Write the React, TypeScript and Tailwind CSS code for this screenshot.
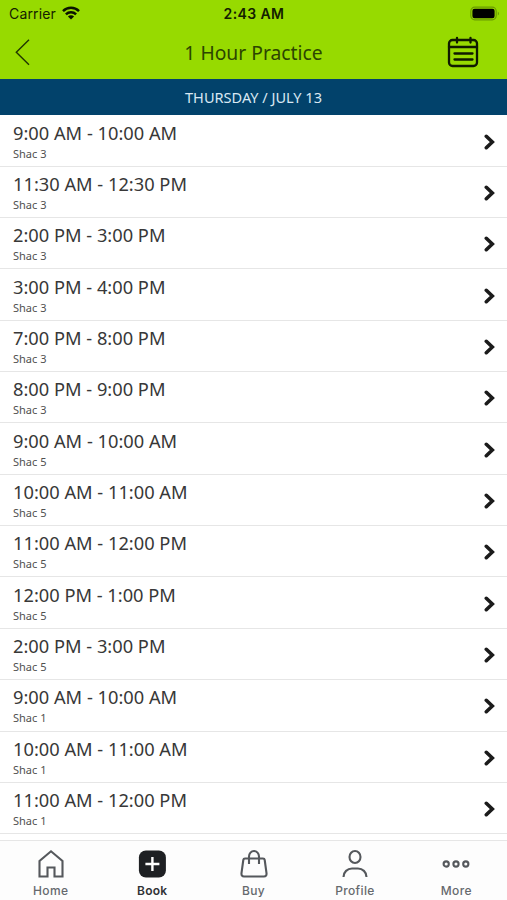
import type { ReactNode } from "react";

type Slot = { time: string; court: string };

const slots: Slot[] = [
  { time: "9:00 AM - 10:00 AM", court: "Shac 3" },
  { time: "11:30 AM - 12:30 PM", court: "Shac 3" },
  { time: "2:00 PM - 3:00 PM", court: "Shac 3" },
  { time: "3:00 PM - 4:00 PM", court: "Shac 3" },
  { time: "7:00 PM - 8:00 PM", court: "Shac 3" },
  { time: "8:00 PM - 9:00 PM", court: "Shac 3" },
  { time: "9:00 AM - 10:00 AM", court: "Shac 5" },
  { time: "10:00 AM - 11:00 AM", court: "Shac 5" },
  { time: "11:00 AM - 12:00 PM", court: "Shac 5" },
  { time: "12:00 PM - 1:00 PM", court: "Shac 5" },
  { time: "2:00 PM - 3:00 PM", court: "Shac 5" },
  { time: "9:00 AM - 10:00 AM", court: "Shac 1" },
  { time: "10:00 AM - 11:00 AM", court: "Shac 1" },
  { time: "11:00 AM - 12:00 PM", court: "Shac 1" },
];

function StatusBar() {
  return (
    <div className="grid h-[27px] grid-cols-[1fr_auto_1fr] items-center pl-[9px] pr-[6px] font-['Inter',sans-serif] text-[14px] leading-[26px] text-[#142000]">
      <div className="flex items-center gap-[6px]">
        <span className="tracking-[0.15px]">Carrier</span>
        <svg className="-mt-[1px]" width="18" height="14" viewBox="0 0 18 14" fill="none" stroke="#0b1400" strokeWidth="2.5">
          <path d="M1 5.1a11.4 11.4 0 0 1 16 0" />
          <path d="M3.9 8.4a7.3 7.3 0 0 1 10.2 0" />
          <path d="M9 13.6 5.9 10.5a4.4 4.4 0 0 1 6.2 0z" fill="#0b1400" stroke="none" />
        </svg>
      </div>
      <div className="-ml-[2px] text-center text-[14px] font-semibold tracking-[0.4px] whitespace-nowrap">2:43 AM</div>
      <svg className="-mt-[1px] justify-self-end" width="31" height="15" viewBox="0 0 31 15">
        <rect x="0.8" y="1.2" width="25.4" height="12.6" rx="4" fill="none" stroke="#6b9c00" strokeWidth="1.2" />
        <rect x="2.4" y="2.8" width="22.2" height="9.4" rx="2.2" fill="#000" />
        <path d="M27.8 5.4a2.8 2.8 0 0 1 0 4.2z" fill="#6b9c00" />
      </svg>
    </div>
  );
}

function Header() {
  return (
    <header className="flex h-[79px] shrink-0 flex-col bg-[#97da00]">
      <StatusBar />
      <div className="grid h-[52px] grid-cols-[80px_1fr_80px] items-center">
        <svg className="-mt-[2px] ml-[14px]" width="16" height="28" viewBox="0 0 16 28" fill="none" stroke="#203500" strokeWidth="1.4">
          <path d="M15 1.8 2.3 14.2 15 26.8" />
        </svg>
        <h1 className="text-center text-[19.3px] leading-[52px] text-[#2c4500]">1 Hour Practice</h1>
        <svg className="-mt-[2px] ml-[20px]" width="32" height="32" viewBox="0 0 32 32" fill="none" stroke="#101a00" strokeWidth="2.3" strokeLinecap="round">
          <rect x="2" y="4" width="28" height="26" rx="3.5" />
          <path d="M2 11h28M10 2v4.5M23.5 2v4.5M7.5 17.5h18M7.5 23.5h18" />
        </svg>
      </div>
    </header>
  );
}

function SlotRow({ time, court }: Slot) {
  return (
    <li className="flex h-[51.35px] items-center justify-between border-b border-[#e6e6e6] pl-[13px] pr-[12px]">
      <div className="pt-[1px]">
        <div className="text-[18.25px] leading-[24px] text-[#383838]">{time}</div>
        <div className="text-[11px] leading-[17px] text-[#505050]">{court}</div>
      </div>
      <svg className="mt-[2px]" width="11" height="16" viewBox="0 0 11 16" fill="none" stroke="#1b1b1b" strokeWidth="3.6" strokeLinecap="round">
        <path d="M2.3 2.3 8.3 8 2.3 13.7" />
      </svg>
    </li>
  );
}

function Tab({ label, active, children }: { label: string; active?: boolean; children: ReactNode }) {
  return (
    <div className="flex flex-1 flex-col items-center pt-[8px]">
      <svg width="30" height="30" viewBox="0 0 30 30" fill="none" stroke="#55585c" strokeWidth="2.1">
        {children}
      </svg>
      <span
        className={
          active
            ? "mt-[4px] font-['Inter',sans-serif] text-[12px] leading-[16px] font-semibold tracking-[0.2px] text-[#303236]"
            : "mt-[4px] font-['Inter',sans-serif] text-[12px] leading-[16px] font-medium tracking-[0.35px] text-[#66696d]"
        }
      >
        {label}
      </span>
    </div>
  );
}

export default function App() {
  return (
    <div className="flex h-[900px] w-[507px] flex-col overflow-hidden bg-white font-['Noto_Sans',sans-serif]">
      <Header />
      <div className="h-[36.4px] shrink-0 bg-[#02426b] text-center text-[14.55px] leading-[37px] text-[#d9e8f3]">
        THURSDAY / JULY 13
      </div>
      <ul className="h-[724.6px] shrink-0 overflow-hidden">
        {slots.map((slot, i) => (
          <SlotRow key={i} {...slot} />
        ))}
      </ul>
      <nav className="flex h-[60px] shrink-0 border-t border-[#e6e6e6] bg-[#fdfdfd]">
        <Tab label="Home">
          <path d="M3.5 27.5V12L15 2.3 26.5 12v15.5h-8v-9h-7v9z" />
        </Tab>
        <Tab label="Book" active>
          <rect x="1.9" y="1.5" width="27" height="27" rx="7" fill="#1e2023" stroke="none" />
          <path d="M15.4 8v14M8.4 15h14" stroke="#fff" strokeWidth="2.4" />
        </Tab>
        <Tab label="Buy">
          <path d="M6 9.5h18q1.5 0 1.7 1.5l1.8 13q.3 3.5-2.5 3.5H5q-2.8 0-2.5-3.5l1.8-13Q4.500 9.500 6 9.500zM10 15V7.500a5 5.500 0 0 1 10 0V15" />
        </Tab>
        <Tab label="Profile">
          <ellipse cx="15" cy="8" rx="5.5" ry="6" />
          <path d="M3.5 28c0-5 4-8.5 8.500-8.500h6c4.500 0 8.500 3.500 8.500 8.500" />
        </Tab>
        <Tab label="More">
          <circle cx="5.2" cy="15" r="2.6" />
          <circle cx="15" cy="15" r="2.6" />
          <circle cx="24.8" cy="15" r="2.6" />
        </Tab>
      </nav>
    </div>
  );
}
